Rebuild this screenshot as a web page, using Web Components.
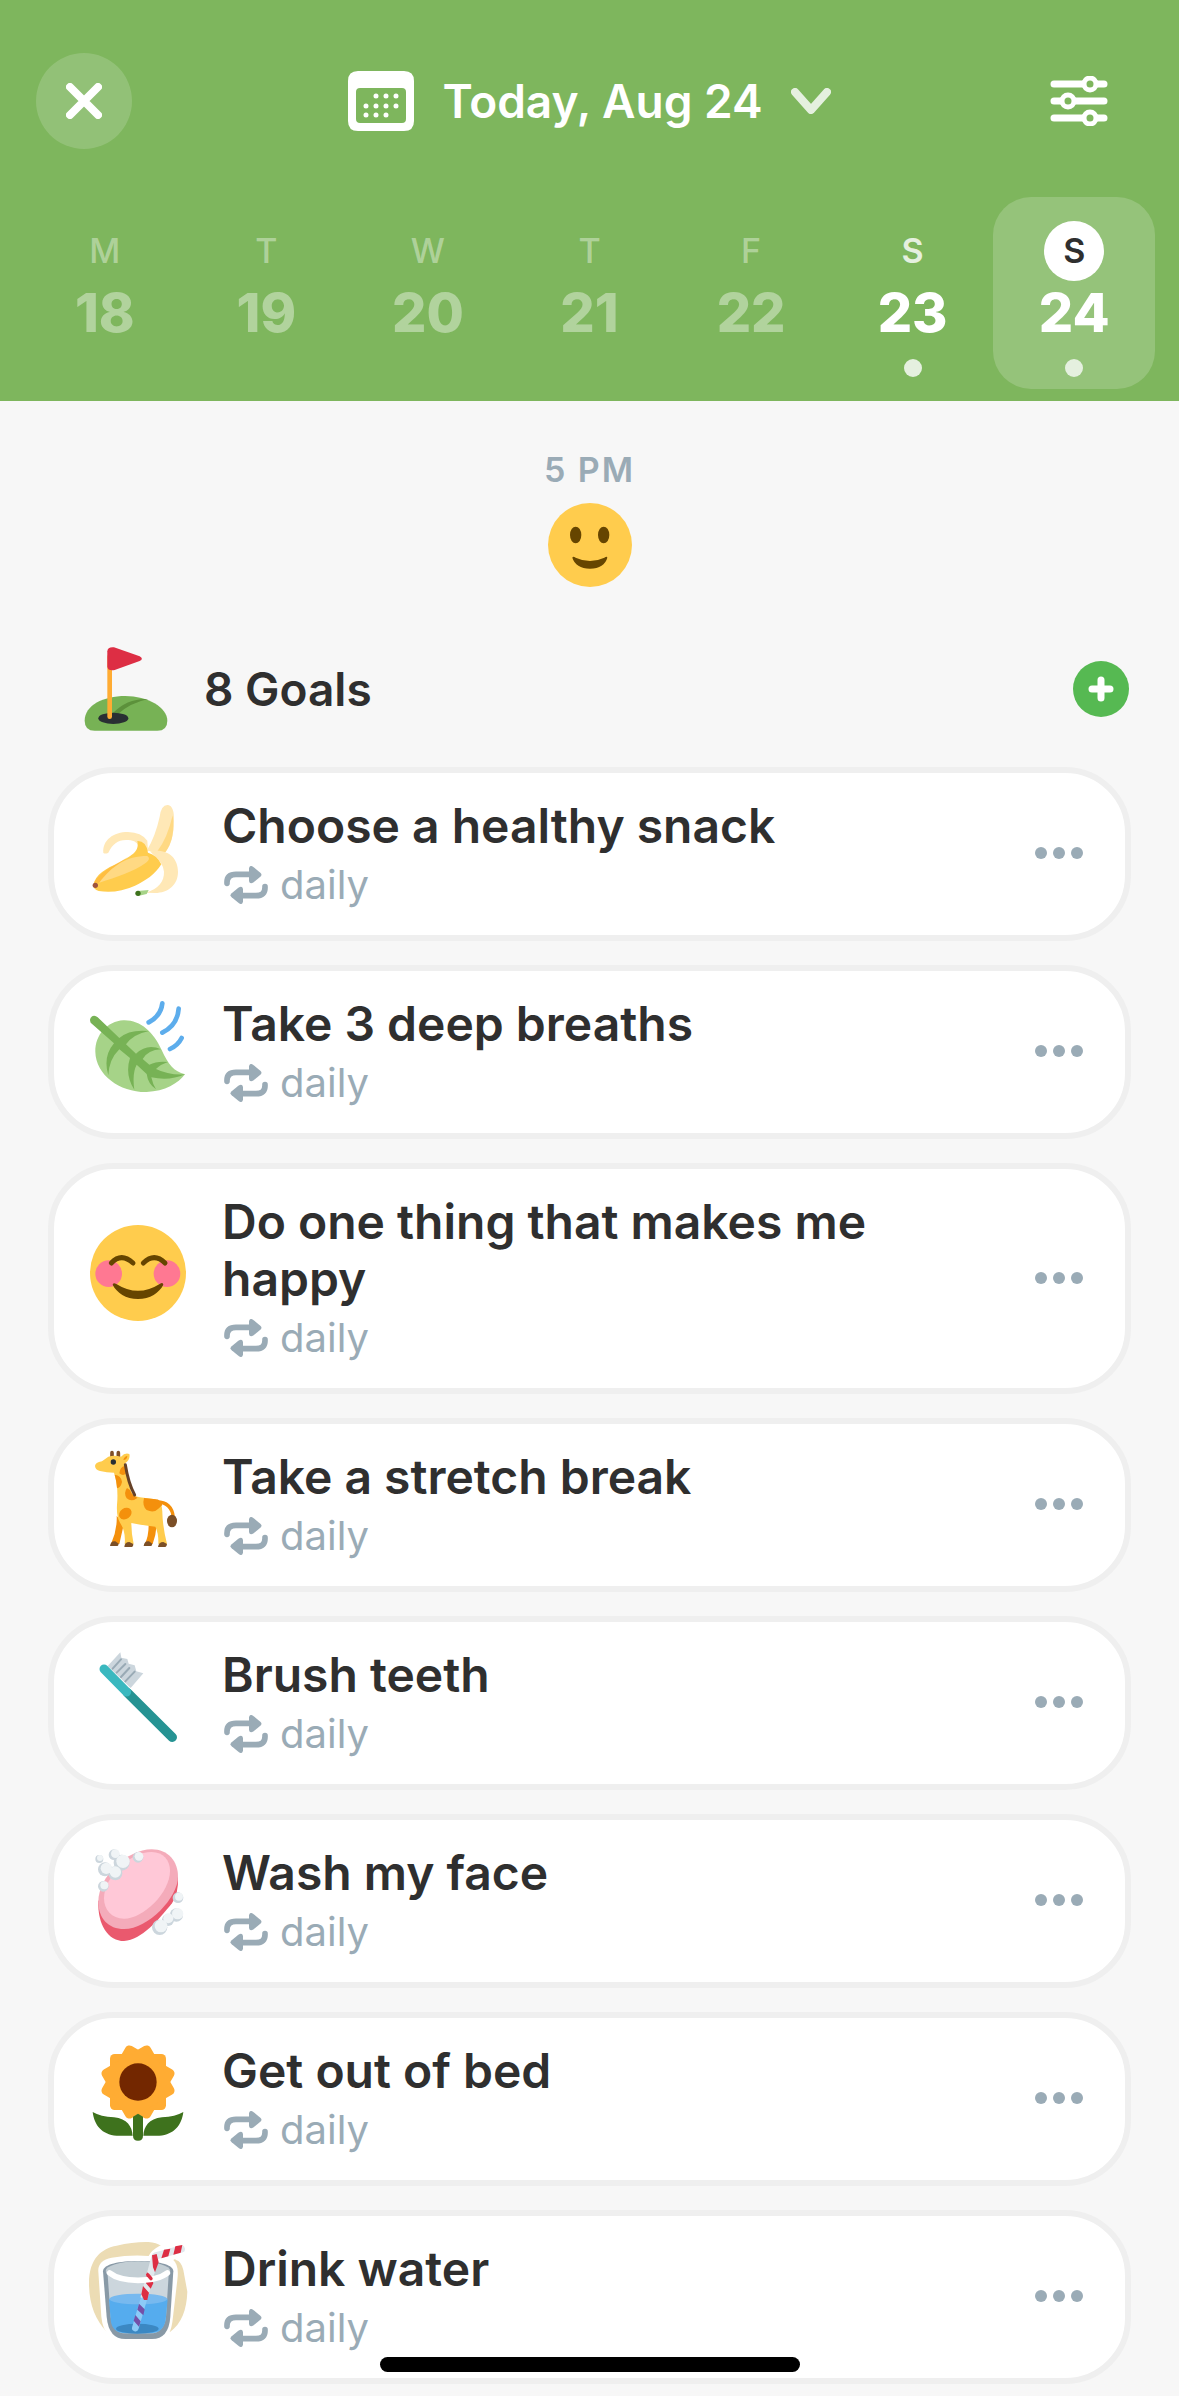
<!DOCTYPE html>
<html lang="en">
<head>
<meta charset="utf-8">
<meta name="viewport" content="width=device-width, initial-scale=1">
<title>Today, Aug 24</title>
<style>
  :root {
    --green: #7eb65d;
    --ink: #2f2f2f;
    --muted: #9aabb6;
    --page: #f7f7f7;
    --line: #efefef;
  }
  body {
    margin: 0;
    background: var(--page);
    color: var(--ink);
    font-family: Inter, "Liberation Sans", sans-serif;
  }
  main { padding: 0 48px 12px; }
  ul {
    list-style: none;
    margin: 0;
    padding: 0;
    display: flex;
    flex-direction: column;
    gap: 24px;
  }
</style>
</head>
<body>

<planner-header label="Today, Aug 24">
  <week-day letter="M" date="18"></week-day>
  <week-day letter="T" date="19"></week-day>
  <week-day letter="W" date="20"></week-day>
  <week-day letter="T" date="21"></week-day>
  <week-day letter="F" date="22"></week-day>
  <week-day letter="S" date="23" active></week-day>
  <week-day letter="S" date="24" active selected></week-day>
</planner-header>

<main>
  <mood-entry time="5 PM">
    <svg viewBox="203 218 252 252" aria-hidden="true">
      <circle cx="329" cy="344" r="126" fill="#ffcc4d"/>
      <g fill="#664500">
        <ellipse cx="286" cy="314" rx="17" ry="25"/>
        <ellipse cx="370" cy="314" rx="17" ry="25"/>
        <path d="M276 382Q278 376 286 382Q329 402 372 382Q380 376 381 382Q372 414 329 415Q286 414 276 382Z"/>
      </g>
    </svg>
  </mood-entry>

  <goals-bar>
    <svg slot="icon" viewBox="132 81 252 252" aria-hidden="true">
      <path fill="#77b255" d="M134 302C134 256 190 228 256 228S382 262 382 302Q382 332 352 332H164Q134 332 134 302Z"/>
      <path fill="#5c913b" d="M218 280Q262 234 325 237Q272 248 234 282Z"/>
      <ellipse cx="220" cy="295" rx="45" ry="17" fill="#292f33"/>
      <path stroke="#ffac33" stroke-width="14" stroke-linecap="round" d="M209 110V290"/>
      <path fill="#dd2e44" d="M202 94Q203 80 222 82L299 109Q312 116 299 123L224 150Q203 153 202 140Z"/>
    </svg>
    8 Goals
  </goals-bar>

  <ul>
    <li><goal-card repeat="daily">
      <!-- banana -->
      <svg slot="icon" viewBox="150 540 288 288" aria-hidden="true">
        <path fill="#ffe8b6" d="M320 692Q346 650 359 590Q364 553 384 555Q403 558 402 602Q402 664 376 697Z"/>
        <path fill="#ffd983" d="M398 586Q407 655 376 697L352 694Q382 655 398 586Z"/>
        <path fill="#ffe8b6" d="M330 694C385 684 414 715 414 755C414 795 385 818 345 819L318 818C355 806 373 785 372 755Q370 728 340 704Z"/>
        <path fill="#ffe8b6" d="M190 699C187 660 220 636 264 636Q304 637 322 662L324 694L298 690Q296 664 272 661C238 656 220 668 205 698Q197 703 190 699Z"/>
        <path fill="#ffcc4d" d="M160 796C165 762 200 745 236 728C282 704 298 692 292 663Q318 662 324 698Q352 706 364 733C344 764 318 782 285 797Q230 822 176 813Q160 808 160 796Z"/>
        <path fill="#ffac33" opacity=".45" d="M162 788C180 755 222 738 262 712Q222 745 176 788Z"/>
        <path fill="#ffd983" d="M178 788C216 738 258 708 322 708Q334 716 318 728C280 756 230 770 178 788Z"/>
        <circle cx="166" cy="796" r="8" fill="#a0533c"/>
        <path fill="#a6d388" d="M292 813L326 810L320 822L294 828Z"/>
        <circle cx="294" cy="820" r="8" fill="#3e721d"/>
      </svg>
      Choose a healthy snack
    </goal-card></li>

    <li><goal-card repeat="daily">
      <!-- leaf in the wind -->
      <svg slot="icon" viewBox="150 114 288 288" aria-hidden="true">
        <path fill="#a6d388" d="M435 343C402 335 384 312 365 270C340 215 300 179 250 181C202 184 165 225 166 275C167 345 240 397 320 396C375 394 415 370 435 343Z"/>
        <path fill="#77b255" d="M152 188Q146 174 158 168Q166 165 173 172L238 234Q268 207 327 213Q280 222 258 253L288 281Q322 249 363 268Q324 270 308 297L328 314Q352 302 384 306Q360 314 348 327Q386 346 435 343Q388 364 334 352Q338 372 348 388Q324 372 320 342L290 314Q276 340 283 389Q254 344 270 294L238 268Q207 298 205 346Q188 290 222 250Z"/>
        <g fill="none" stroke="#5dadec" stroke-width="14" stroke-linecap="round">
          <path d="M367 130Q363 168 326 187M416 146Q412 196 367 218M425 234Q414 256 390 267"/>
        </g>
      </svg>
      Take 3 deep breaths
    </goal-card></li>

    <li><goal-card repeat="daily">
      <!-- blushing smile -->
      <svg slot="icon" viewBox="150 192 288 288" aria-hidden="true">
        <circle cx="294" cy="336" r="144" fill="#ffcc4d"/>
        <g fill="#ff7892"><circle cx="206" cy="338" r="40"/><circle cx="381" cy="338" r="40"/></g>
        <path fill="none" stroke="#664500" stroke-width="15" stroke-linecap="round" d="M214 306Q244 274 279 306M310 306Q343 274 375 306"/>
        <path fill="#664500" d="M218 371Q219 363 229 369Q294 410 359 369Q369 362 370 371C358 395 330 414 294 414S230 395 218 371Z"/>
      </svg>
      Do one thing that makes me happy
    </goal-card></li>

    <li><goal-card repeat="daily">
      <!-- giraffe -->
      <svg slot="icon" viewBox="150 123 288 288" aria-hidden="true">
        <path fill="none" stroke="#f4900c" stroke-width="10" d="M350 276Q395 276 400 322"/>
        <ellipse cx="396" cy="333" rx="15" ry="19" fill="#7b4f27"/>
        <path fill="#f4900c" d="M230 318Q232 360 213 402H238L252 340ZM326 344Q326 380 314 402H338Q348 375 350 344Z"/>
        <path stroke="#804f27" stroke-width="11" stroke-linecap="round" d="M216 128V142M235 128V142"/>
        <path fill="#ffcc4d" d="M165 168Q165 158 186 154L205 140Q222 134 243 140Q255 127 268 132Q272 148 255 160Q262 205 272 240Q278 260 300 262L345 268Q368 276 367 308Q368 350 381 402H355Q356 370 346 350Q310 346 274 339Q274 370 281 402H254Q258 365 240 338Q229 320 231 285Q236 230 222 188Q200 188 180 183Q166 180 165 168Z"/>
        <g fill="#f4900c">
          <path d="M250 150Q253 139 262 138Q261 150 250 150ZM254 168Q240 170 238 190Q250 200 258 190ZM224 194Q244 196 246 216Q242 234 231 234Q230 214 224 194ZM261 234Q250 248 260 265Q275 278 293 263Q276 258 270 240ZM312 264Q306 288 320 300Q342 310 355 296L367 285Q360 268 348 268Z"/>
          <ellipse cx="256" cy="311" rx="20" ry="16" transform="rotate(-35 256 311)"/>
        </g>
        <path fill="none" stroke="#664127" stroke-width="9" stroke-linecap="round" d="M256 164Q265 220 284 255"/>
        <circle cx="220" cy="156" r="8" fill="#292f33"/>
        <g fill="#7b4f27">
          <path d="M210 408Q212 392 226 394L236 401Q235 408 232 408ZM311 408Q313 392 327 394L337 401Q336 408 333 408ZM253 411Q254 396 268 396L280 402Q280 411 276 411ZM354 411Q356 396 370 396L381 402Q380 411 376 411Z"/>
        </g>
      </svg>
      Take a stretch break
    </goal-card></li>

    <li><goal-card repeat="daily">
      <!-- toothbrush -->
      <svg slot="icon" viewBox="150 117 288 288" aria-hidden="true">
        <path fill="#ccd6dd" d="M203 168L241 127L244 143L262 147L266 161L284 166L289 184L310 190L272 234Z"/>
        <path stroke="#99aab5" stroke-width="6" stroke-linecap="round" d="M218 176L243 148M230 188L256 162M243 201L268 174M256 214L284 185"/>
        <path stroke="#269393" stroke-width="28" stroke-linecap="round" d="M262 248L397 382"/>
        <path stroke="#3ab8bf" stroke-width="27" stroke-linecap="round" d="M192 177L260 246"/>
      </svg>
      Brush teeth
    </goal-card></li>

    <li><goal-card repeat="daily">
      <!-- soap -->
      <svg slot="icon" viewBox="150 111 288 288" aria-hidden="true">
        <path fill="#ea596e" d="M175 272C172 345 205 393 252 393C305 390 355 330 396 280Q416 250 414 200Z"/>
        <path fill="#f4abba" d="M175 275C175 200 262 118 335 118C385 118 414 155 414 200C414 262 325 357 252 357C205 357 175 325 175 275Z"/>
        <path fill="#ffc8d7" d="M192 265C192 200 270 126 335 126C370 126 390 152 390 182C390 248 310 326 252 326C215 326 192 300 192 265Z"/>
        <g fill="#ccd6dd">
          <circle cx="178" cy="147" r="12"/><circle cx="222" cy="134" r="16"/><circle cx="226" cy="190" r="21"/>
          <circle cx="195" cy="178" r="21"/><circle cx="245" cy="158" r="24"/><circle cx="294" cy="142" r="16"/>
          <circle cx="190" cy="229" r="16"/><circle cx="414" cy="263" r="16"/><circle cx="384" cy="330" r="18"/>
          <circle cx="409" cy="315" r="20"/><circle cx="359" cy="352" r="23"/>
        </g>
        <g fill="#f0f4f6">
          <circle cx="180" cy="144" r="9"/><circle cx="226" cy="131" r="13"/><circle cx="226" cy="186" r="17"/>
          <circle cx="199" cy="175" r="17"/><circle cx="249" cy="154" r="20"/><circle cx="297" cy="139" r="13"/>
          <circle cx="193" cy="226" r="12"/><circle cx="417" cy="260" r="12"/><circle cx="385" cy="325" r="15"/>
          <circle cx="413" cy="311" r="17"/><circle cx="363" cy="348" r="19"/>
        </g>
      </svg>
      Wash my face
    </goal-card></li>

    <li><goal-card repeat="daily">
      <!-- sunflower -->
      <svg slot="icon" viewBox="150 105 288 288" aria-hidden="true">
        <g fill="#ffac33">
          <rect x="210" y="132" width="168" height="168" rx="14"/>
          <rect x="210" y="132" width="168" height="168" rx="14" transform="rotate(30 294 216)"/>
          <rect x="210" y="132" width="168" height="168" rx="14" transform="rotate(60 294 216)"/>
        </g>
        <circle cx="294" cy="216" r="56" fill="#732700"/>
        <g fill="#3e721d">
          <path d="M279 320L294 311L309 320V377Q309 392 294 392T279 377Z"/>
          <path d="M158 306Q182 320 222 322C262 326 276 350 278 377H230C185 374 163 345 158 306Z"/>
          <path d="M430 306Q406 320 366 322C326 326 312 350 310 377H358C403 374 425 345 430 306Z"/>
        </g>
      </svg>
      Get out of bed
    </goal-card></li>

    <li><goal-card repeat="daily">
      <!-- glass of water with a straw -->
      <svg slot="icon" viewBox="150 129 288 288" aria-hidden="true">
        <path fill="#ecdcb4" d="M147 250C147 175 185 145 230 137Q280 125 325 126Q350 128 364 138L408 180Q424 184 430 210L442 275C440 330 425 370 390 396H201C165 360 147 310 147 250Z"/>
        <path fill="#fff" d="M175 215Q172 182 215 173Q270 164 326 168Q342 132 430 116L452 150L400 180Q418 196 412 240L399 350Q396 385 386 402H206Q188 390 184 350Z"/>
        <path fill="#8899a6" d="M189 214C189 192 240 183 294 183S400 192 400 214L391 350Q386 417 336 417H256Q206 417 200 350Z"/>
        <path fill="#ccd6dd" d="M203 225Q294 255 386 225L378 350Q372 400 330 400H258Q218 400 212 350Z"/>
        <ellipse cx="294" cy="213" rx="97" ry="29" fill="#c3ced4"/>
        <path fill="#55acee" d="M207 298H383L377 360Q370 400 330 400H258Q216 400 212 360Z"/>
        <ellipse cx="295" cy="297" rx="87" ry="16" fill="#77b9ef"/>
        <ellipse cx="292" cy="386" rx="64" ry="15" fill="#3b88c3"/>
        <path fill="none" stroke="#e1e8ed" stroke-width="22" stroke-linecap="round" stroke-linejoin="round" d="M424 147L346 168L313 290"/>
        <path stroke="#8ccaf7" stroke-width="20" stroke-linecap="round" d="M310 302L286 384"/>
        <path fill="#dd2e44" d="M406 139L427 135L422 158L400 164ZM372 149L391 146L385 169L364 175ZM336 166L350 162L356 187L345 217L339 202ZM321 216L336 236L340 250L332 266L318 250ZM309 258L327 278L322 300H312L304 283Z"/>
        <path fill="#7450a8" d="M297 311L314 328L310 346L292 329ZM286 345L302 364L297 380L281 362Z"/>
        <path fill="none" stroke="#fff" stroke-width="17" stroke-linecap="round" d="M209 219Q235 240 294 241Q356 240 382 219"/>
        <path stroke="#dd2e44" stroke-width="10" stroke-linecap="round" d="M323 224L333 236"/>
      </svg>
      Drink water
    </goal-card></li>
  </ul>
</main>

<home-indicator></home-indicator>

<script>
// planner-header: green bar with the date picker and the week
class PlannerHeader extends HTMLElement {
  constructor() {
    super();
    const shadow = this.attachShadow({ mode: 'open' });
    shadow.innerHTML = `
      <style>
        :host {
          display: flex;
          flex-direction: column;
          gap: 48px;
          padding: 53px 0 12px;
          background: var(--green);
          color: #fff;
        }
        .bar {
          display: grid;
          grid-template-columns: 1fr auto 1fr;
          align-items: center;
          padding: 0 36px;
        }
        .week {
          display: grid;
          grid-template-columns: repeat(7, 1fr);
          padding: 0 24px;
        }
        button {
          display: flex;
          align-items: center;
          justify-content: center;
          height: 96px;
          padding: 0;
          border: 0;
          background: none;
          color: inherit;
          font: inherit;
          cursor: pointer;
        }
        svg { display: block; fill: none; stroke-linecap: round; stroke-linejoin: round; }
        .close {
          width: 96px;
          border-radius: 50%;
          background: rgba(255, 255, 255, 0.16);
        }
        .date {
          gap: 28px;
          font-size: 46px;
          font-weight: 600;
          line-height: 57px;
        }
        .settings { width: 96px; justify-self: end; margin-right: 16px; }
      </style>
      <div class="bar">
        <button class="close" aria-label="Close">
          <svg width="36" height="36" viewBox="0 0 36 36" stroke="#fff" stroke-width="8">
            <path d="M4 4L32 32M32 4L4 32"/>
          </svg>
        </button>
        <button class="date">
          <svg width="66" height="60" viewBox="0 0 66 60">
            <path fill="#fff" fill-rule="evenodd" d="M10 0H56Q66 0 66 10V50Q66 60 56 60H10Q0 60 0 50V10Q0 0 10 0ZM12 17Q8 17 8 21V48Q8 52 12 52H54Q58 52 58 48V21Q58 17 54 17Z"/>
            <path stroke="#fff" stroke-width="5" d="M28 25h0M38 25h0M48 25h0M18 35h0M28 35h0M38 35h0M48 35h0M18 44h0M28 44h0M38 44h0"/>
          </svg>
          <span id="label"></span>
          <svg width="40" height="26" viewBox="0 0 40 26" stroke="#e5f0df" stroke-width="8">
            <path d="M4 4L20 22L36 4"/>
          </svg>
        </button>
        <button class="settings" aria-label="Settings">
          <svg width="58" height="50" viewBox="0 0 58 50" stroke="#fff" stroke-width="7">
            <path d="M4 8H54M4 25H54M4 42H54"/>
            <g fill="#7eb65d" stroke-width="5">
              <circle cx="40" cy="8" r="6"/><circle cx="18" cy="25" r="6"/><circle cx="40" cy="42" r="6"/>
            </g>
          </svg>
        </button>
      </div>
      <nav class="week" aria-label="Week"><slot></slot></nav>
    `;
  }

  connectedCallback() {
    this.shadowRoot.querySelector('#label').textContent = this.getAttribute('label');
  }
}

// week-day: one day of the strip
class WeekDay extends HTMLElement {
  constructor() {
    super();
    const shadow = this.attachShadow({ mode: 'open' });
    shadow.innerHTML = `
      <style>
        :host { display: block; }
        button {
          display: flex;
          flex-direction: column;
          align-items: center;
          box-sizing: border-box;
          width: 100%;
          height: 192px;
          padding: 24px 0 12px;
          border: 0;
          border-radius: 38px;
          background: none;
          color: rgba(255, 255, 255, 0.4);
          font: inherit;
          cursor: pointer;
        }
        .letter {
          width: 60px;
          border-radius: 50%;
          font-size: 34px;
          font-weight: 500;
          line-height: 60px;
        }
        .date { font-size: 54px; font-weight: 800; line-height: 64px; }
        .dot {
          width: 18px;
          height: 18px;
          margin-top: 14px;
          border-radius: 50%;
        }
        :host([active]) button { color: #fff; }
        :host([active]) .letter { color: #e5f0df; font-weight: 600; }
        :host([active]) .dot { background: #e5f0df; }
        :host([selected]) button { background: rgba(255, 255, 255, 0.18); }
        :host([selected]) .letter { background: #fff; color: var(--ink); }
      </style>
      <button>
        <span class="letter"></span>
        <span class="date"></span>
        <span class="dot"></span>
      </button>
    `;
  }

  connectedCallback() {
    this.shadowRoot.querySelector('.letter').textContent = this.getAttribute('letter');
    this.shadowRoot.querySelector('.date').textContent = this.getAttribute('date');
  }
}

// mood-entry: time of the check-in over its face
class MoodEntry extends HTMLElement {
  constructor() {
    super();
    const shadow = this.attachShadow({ mode: 'open' });
    shadow.innerHTML = `
      <style>
        :host {
          display: flex;
          flex-direction: column;
          align-items: center;
          gap: 12px;
          padding: 48px 0 36px;
        }
        time {
          color: var(--muted);
          font-size: 34px;
          font-weight: 600;
          line-height: 42px;
          letter-spacing: 2px;
        }
        ::slotted(svg) { display: block; width: 84px; height: 84px; }
      </style>
      <time></time>
      <slot></slot>
    `;
  }

  connectedCallback() {
    this.shadowRoot.querySelector('time').textContent = this.getAttribute('time');
  }
}

// goals-bar: list heading with the add button
class GoalsBar extends HTMLElement {
  constructor() {
    super();
    const shadow = this.attachShadow({ mode: 'open' });
    shadow.innerHTML = `
      <style>
        :host {
          display: flex;
          align-items: center;
          gap: 36px;
          padding: 24px 2px 36px 36px;
        }
        ::slotted(svg) { display: block; width: 84px; height: 84px; }
        h2 {
          flex: 1;
          margin: 0;
          font-size: 46px;
          font-weight: 600;
          line-height: 57px;
        }
        button {
          display: flex;
          align-items: center;
          justify-content: center;
          width: 56px;
          height: 56px;
          padding: 0;
          border: 0;
          border-radius: 50%;
          background: #56b952;
          cursor: pointer;
        }
      </style>
      <slot name="icon"></slot>
      <h2><slot></slot></h2>
      <button aria-label="Add goal">
        <svg width="26" height="26" viewBox="0 0 26 26" stroke="#fff" stroke-width="7" stroke-linecap="round">
          <path d="M13 4V22M4 13H22"/>
        </svg>
      </button>
    `;
  }
}

// goal-card: icon, title, how often it repeats, menu
class GoalCard extends HTMLElement {
  constructor() {
    super();
    const shadow = this.attachShadow({ mode: 'open' });
    shadow.innerHTML = `
      <style>
        :host {
          display: flex;
          align-items: center;
          border: 6px solid var(--line);
          border-radius: 66px;
          background: #fff;
          padding: 24px 24px 26px 36px;
        }
        ::slotted(svg) {
          display: block;
          flex: none;
          width: 96px;
          height: 96px;
          margin-bottom: 10px;
          overflow: visible;
        }
        .text {
          display: flex;
          flex-direction: column;
          flex: 1;
          gap: 7px;
          padding: 0 36px;
        }
        h3 {
          margin: 0;
          font-size: 48px;
          font-weight: 600;
          line-height: 57px;
        }
        p {
          display: flex;
          align-items: center;
          gap: 12px;
          margin: 0;
          padding-left: 2px;
          color: var(--muted);
          font-size: 40px;
          line-height: 48px;
        }
        p svg { display: block; }
        button {
          display: flex;
          align-items: center;
          justify-content: center;
          gap: 6px;
          width: 84px;
          height: 84px;
          padding: 0;
          border: 0;
          background: none;
          cursor: pointer;
        }
        i {
          width: 12px;
          height: 12px;
          border-radius: 50%;
          background: var(--muted);
        }
      </style>
      <slot name="icon"></slot>
      <div class="text">
        <h3><slot></slot></h3>
        <p>
          <svg width="44" height="38" viewBox="552 743 132 114" fill="#9aabb6" aria-hidden="true">
            <g id="arrow">
              <path fill="none" stroke="#9aabb6" stroke-width="17" stroke-linecap="round" d="M561 795V792Q561 768 588 768H632"/>
              <path d="M627 750Q629 739 639 745L661 763Q668 769 661 775L641 792Q629 799 627 788Z"/>
            </g>
            <use href="#arrow" transform="rotate(180 618 800)"/>
          </svg>
          <span id="repeat"></span>
        </p>
      </div>
      <button aria-label="More"><i></i><i></i><i></i></button>
    `;
  }

  connectedCallback() {
    this.shadowRoot.querySelector('#repeat').textContent = this.getAttribute('repeat');
  }
}

// home-indicator: system bar floating over the page
class HomeIndicator extends HTMLElement {
  constructor() {
    super();
    const shadow = this.attachShadow({ mode: 'open' });
    shadow.innerHTML = `
      <style>
        :host {
          position: fixed;
          left: 0;
          right: 0;
          bottom: 24px;
          display: flex;
          justify-content: center;
          pointer-events: none;
        }
        div { width: 420px; height: 15px; border-radius: 8px; background: #000; }
      </style>
      <div></div>
    `;
  }
}

customElements.define('planner-header', PlannerHeader);
customElements.define('week-day', WeekDay);
customElements.define('mood-entry', MoodEntry);
customElements.define('goals-bar', GoalsBar);
customElements.define('goal-card', GoalCard);
customElements.define('home-indicator', HomeIndicator);
</script>
</body>
</html>
